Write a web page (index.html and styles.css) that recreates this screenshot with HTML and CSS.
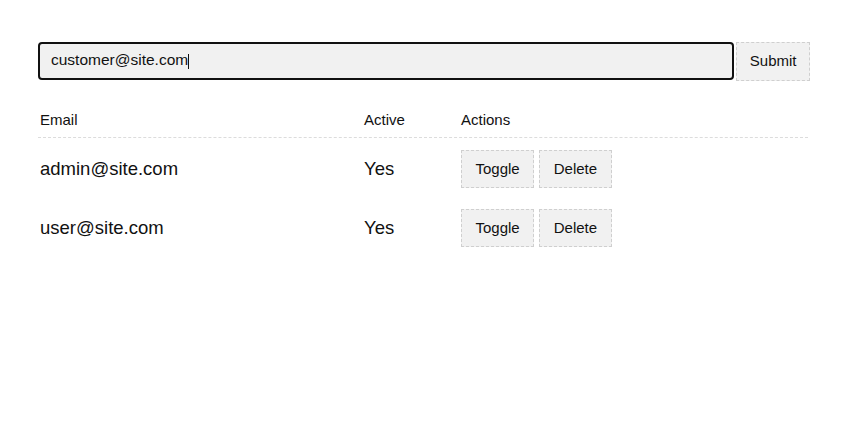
FILE: index.html
```html
<!DOCTYPE html>
<html lang="en">
<head>
<meta charset="utf-8">
<title>Users</title>
<link rel="stylesheet" href="styles.css">
</head>
<body>
<main class="container">
  <form class="add-form" onsubmit="return false">
    <div class="text-input"><span class="value">customer@site.com</span><span class="caret"></span></div>
    <button class="btn btn-submit" type="submit">Submit</button>
  </form>
  <div class="table">
    <div class="row head">
      <div class="cell">Email</div>
      <div class="cell">Active</div>
      <div class="cell">Actions</div>
    </div>
    <div class="row">
      <div class="cell">admin@site.com</div>
      <div class="cell">Yes</div>
      <div class="cell actions"><button class="btn">Toggle</button><button class="btn">Delete</button></div>
    </div>
    <div class="row">
      <div class="cell">user@site.com</div>
      <div class="cell">Yes</div>
      <div class="cell actions"><button class="btn">Toggle</button><button class="btn">Delete</button></div>
    </div>
  </div>
</main>
</body>
</html>
```
FILE: styles.css
```css
* { box-sizing: border-box; }
html, body { margin: 0; background: #fff; }
body {
  font-family: "Liberation Sans", Arial, sans-serif;
  color: #111;
}
.container {
  width: 770px;
  margin: 0 0 0 38px;
  padding-top: 42px;
}
.add-form {
  display: flex;
  gap: 2px;
  width: 772px;
}
.text-input {
  flex: 1;
  height: 38px;
  border: 2px solid #111;
  border-radius: 4px;
  background: #f1f1f1;
  padding: 0 11px 2px;
  display: flex;
  align-items: center;
  font-size: 15.5px;
  color: #111;
}
.caret {
  display: inline-block;
  width: 1px;
  height: 15px;
  margin-top: 2px;
  background: #111;
}
.btn {
  font-family: "Liberation Sans", Arial, sans-serif;
  font-size: 15px;
  color: #111;
  height: 38px;
  padding: 0 13.5px 2px;
  background: #f1f1f1;
  border: 1px dashed #cfcfcf;
  border-radius: 0;
}
.btn-submit {
  height: 39px;
  padding: 0 12.5px 2px;
}
.table { margin-top: 30px; }
.row {
  display: grid;
  grid-template-columns: 324px 97px 1fr;
  align-items: center;
  padding: 12px 0 9px 2px;
  font-size: 18.5px;
}
.row.head {
  font-size: 15px;
  line-height: 17px;
  padding: 0 0 9px 2px;
  border-bottom: 1px dashed #dcdcdc;
}
.actions {
  display: flex;
  gap: 5px;
}
```
